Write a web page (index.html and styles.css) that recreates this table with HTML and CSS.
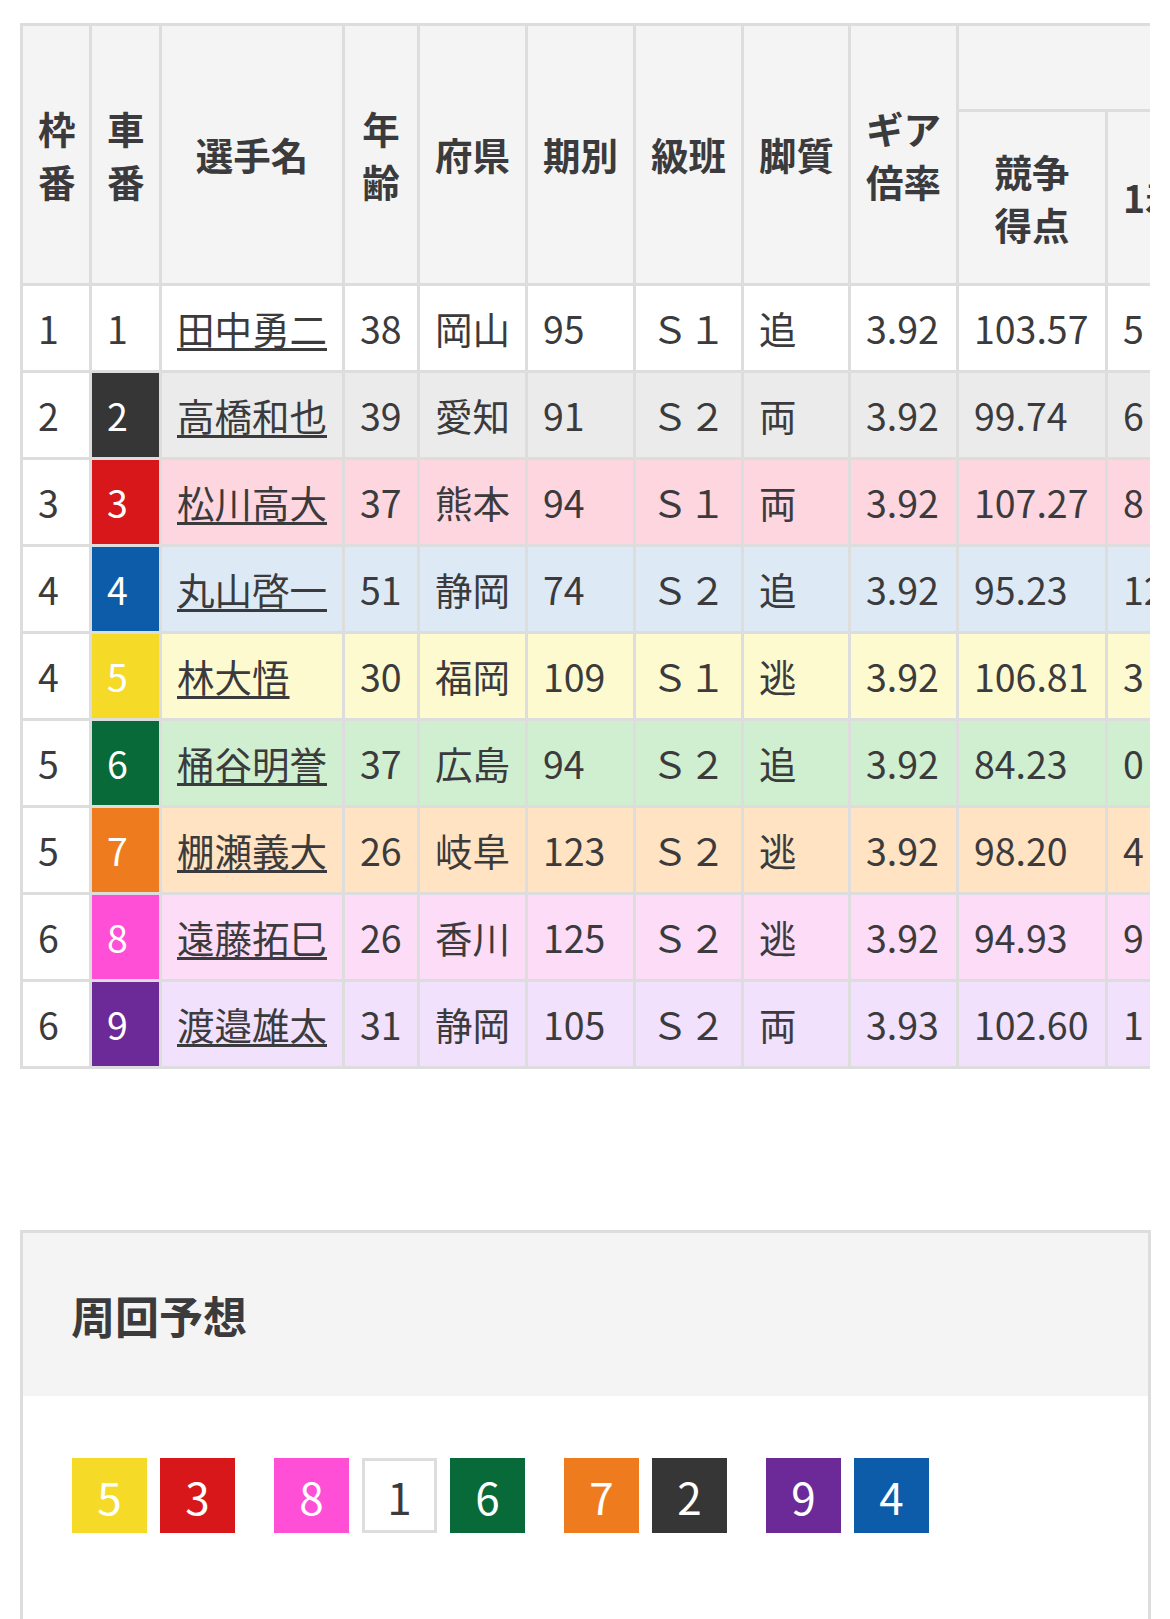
FILE: index.html
```html
<!DOCTYPE html>
<html lang="ja">
<head>
<meta charset="utf-8">
<title>出走表</title>
<link rel="stylesheet" href="styles.css">
</head>
<body>
<div class="page">
  <div class="table-wrap">
    <table class="entry">
      <colgroup>
        <col class="c-waku"><col class="c-sha"><col class="c-name"><col class="c-age"><col class="c-pref"><col class="c-ki"><col class="c-kyu"><col class="c-kyaku"><col class="c-gear"><col class="c-score"><col class="c-win">
      </colgroup>
      <thead>
        <tr class="h1">
          <th rowspan="2">枠<br>番</th>
          <th rowspan="2">車<br>番</th>
          <th rowspan="2">選手名</th>
          <th rowspan="2">年<br>齢</th>
          <th rowspan="2">府県</th>
          <th rowspan="2">期別</th>
          <th rowspan="2">級班</th>
          <th rowspan="2">脚質</th>
          <th rowspan="2">ギア<br>倍率</th>
          <th colspan="2"></th>
        </tr>
        <tr class="h2">
          <th>競争<br>得点</th>
          <th>1着</th>
        </tr>
      </thead>
      <tbody>
        <tr class="r1"><td class="waku">1</td><td class="sha">1</td><td><a href="#">田中勇二</a></td><td>38</td><td>岡山</td><td>95</td><td>Ｓ１</td><td>追</td><td>3.92</td><td>103.57</td><td>5</td></tr>
        <tr class="r2"><td class="waku">2</td><td class="sha">2</td><td><a href="#">高橋和也</a></td><td>39</td><td>愛知</td><td>91</td><td>Ｓ２</td><td>両</td><td>3.92</td><td>99.74</td><td>6</td></tr>
        <tr class="r3"><td class="waku">3</td><td class="sha">3</td><td><a href="#">松川高大</a></td><td>37</td><td>熊本</td><td>94</td><td>Ｓ１</td><td>両</td><td>3.92</td><td>107.27</td><td>8</td></tr>
        <tr class="r4"><td class="waku">4</td><td class="sha">4</td><td><a href="#">丸山啓一</a></td><td>51</td><td>静岡</td><td>74</td><td>Ｓ２</td><td>追</td><td>3.92</td><td>95.23</td><td>12</td></tr>
        <tr class="r5"><td class="waku">4</td><td class="sha">5</td><td><a href="#">林大悟</a></td><td>30</td><td>福岡</td><td>109</td><td>Ｓ１</td><td>逃</td><td>3.92</td><td>106.81</td><td>3</td></tr>
        <tr class="r6"><td class="waku">5</td><td class="sha">6</td><td><a href="#">桶谷明誉</a></td><td>37</td><td>広島</td><td>94</td><td>Ｓ２</td><td>追</td><td>3.92</td><td>84.23</td><td>0</td></tr>
        <tr class="r7"><td class="waku">5</td><td class="sha">7</td><td><a href="#">棚瀬義大</a></td><td>26</td><td>岐阜</td><td>123</td><td>Ｓ２</td><td>逃</td><td>3.92</td><td>98.20</td><td>4</td></tr>
        <tr class="r8"><td class="waku">6</td><td class="sha">8</td><td><a href="#">遠藤拓巳</a></td><td>26</td><td>香川</td><td>125</td><td>Ｓ２</td><td>逃</td><td>3.92</td><td>94.93</td><td>9</td></tr>
        <tr class="r9"><td class="waku">6</td><td class="sha">9</td><td><a href="#">渡邉雄太</a></td><td>31</td><td>静岡</td><td>105</td><td>Ｓ２</td><td>両</td><td>3.93</td><td>102.60</td><td>1</td></tr>
      </tbody>
    </table>
  </div>

  <section class="lap">
    <h2 class="lap-title">周回予想</h2>
    <div class="lap-body">
      <div class="lap-group"><span class="chip k5">5</span><span class="chip k3">3</span></div>
      <div class="lap-group"><span class="chip k8">8</span><span class="chip k1">1</span><span class="chip k6">6</span></div>
      <div class="lap-group"><span class="chip k7">7</span><span class="chip k2">2</span></div>
      <div class="lap-group"><span class="chip k9">9</span><span class="chip k4">4</span></div>
    </div>
  </section>
</div>
</body>
</html>
```

FILE: styles.css
```css
* { box-sizing: border-box; }

html, body {
  margin: 0;
  padding: 0;
  background: #ffffff;
}

body {
  font-family: "Noto Sans CJK JP", "Noto Sans", sans-serif;
  color: #3b3b3d;
}

.page {
  padding: 23px 20px 0;
}

.table-wrap {
  width: 1130px;
  overflow: hidden;
}

.entry {
  border-collapse: separate;
  border-spacing: 3px;
  background: #dddddd;
  table-layout: fixed;
  width: 1179px;
  font-size: 37.5px;
}

.c-waku { width: 66px; }
.c-sha { width: 67px; }
.c-name { width: 180px; }
.c-age { width: 72px; }
.c-pref { width: 105px; }
.c-ki { width: 105px; }
.c-kyu { width: 105px; }
.c-kyaku { width: 104px; }
.c-gear { width: 105px; }
.c-score { width: 146px; }
.c-win { width: 88px; }

.entry th,
.entry td {
  padding: 0 15px;
  white-space: nowrap;
}

.entry th {
  background: #f4f4f4;
  font-weight: 700;
  text-align: center;
  line-height: 1.4;
  vertical-align: middle;
}

.entry .h1 { height: 83px; }
.entry .h2 { height: 171px; }

.entry td {
  height: 84px;
  text-align: left;
  vertical-align: middle;
  line-height: 1.5;
  font-weight: 400;
}

.entry td a {
  color: #3b3b3d;
  text-decoration: underline;
  text-decoration-thickness: 2.5px;
  text-underline-offset: 4px;
}

.entry td.waku { background: #ffffff; }
.entry td.sha { color: #ffffff; }

.r1 td { background: #ffffff; }
.r1 td.sha { background: #ffffff; color: #3b3b3d; }

.r2 td { background: #ebebeb; }
.r2 td.sha { background: #363636; }

.r3 td { background: #fdd6df; }
.r3 td.sha { background: #d8171b; }

.r4 td { background: #ddeaf6; }
.r4 td.sha { background: #0c5ca9; }

.r5 td { background: #fefad0; }
.r5 td.sha { background: #f5db28; }

.r6 td { background: #d0efd0; }
.r6 td.sha { background: #086a39; }

.r7 td { background: #ffe3c2; }
.r7 td.sha { background: #ee7c1e; }

.r8 td { background: #fddcf8; }
.r8 td.sha { background: #ff4fd6; }

.r9 td { background: #f1e1fc; }
.r9 td.sha { background: #6b2a98; }

.lap {
  margin-top: 161px;
  border: 3px solid #dddddd;
  border-bottom: none;
  width: 1131px;
}

.lap-title {
  margin: 0;
  height: 163px;
  display: flex;
  align-items: center;
  padding-left: 48px;
  background: #f4f4f4;
  font-size: 44px;
  font-weight: 700;
  color: #3b3b3d;
}

.lap-body {
  display: flex;
  gap: 39px;
  padding: 62px 0 100px 49px;
  background: #ffffff;
}

.lap-group {
  display: flex;
  gap: 13px;
}

.chip {
  width: 75px;
  height: 75px;
  display: flex;
  align-items: center;
  justify-content: center;
  font-size: 44px;
  color: #ffffff;
  line-height: 1;
}

.k1 { background: #ffffff; border: 3px solid #dddddd; color: #3b3b3d; }
.k2 { background: #363636; }
.k3 { background: #d8171b; }
.k4 { background: #0c5ca9; }
.k5 { background: #f5db28; }
.k6 { background: #086a39; }
.k7 { background: #ee7c1e; }
.k8 { background: #ff4fd6; }
.k9 { background: #6b2a98; }
```
